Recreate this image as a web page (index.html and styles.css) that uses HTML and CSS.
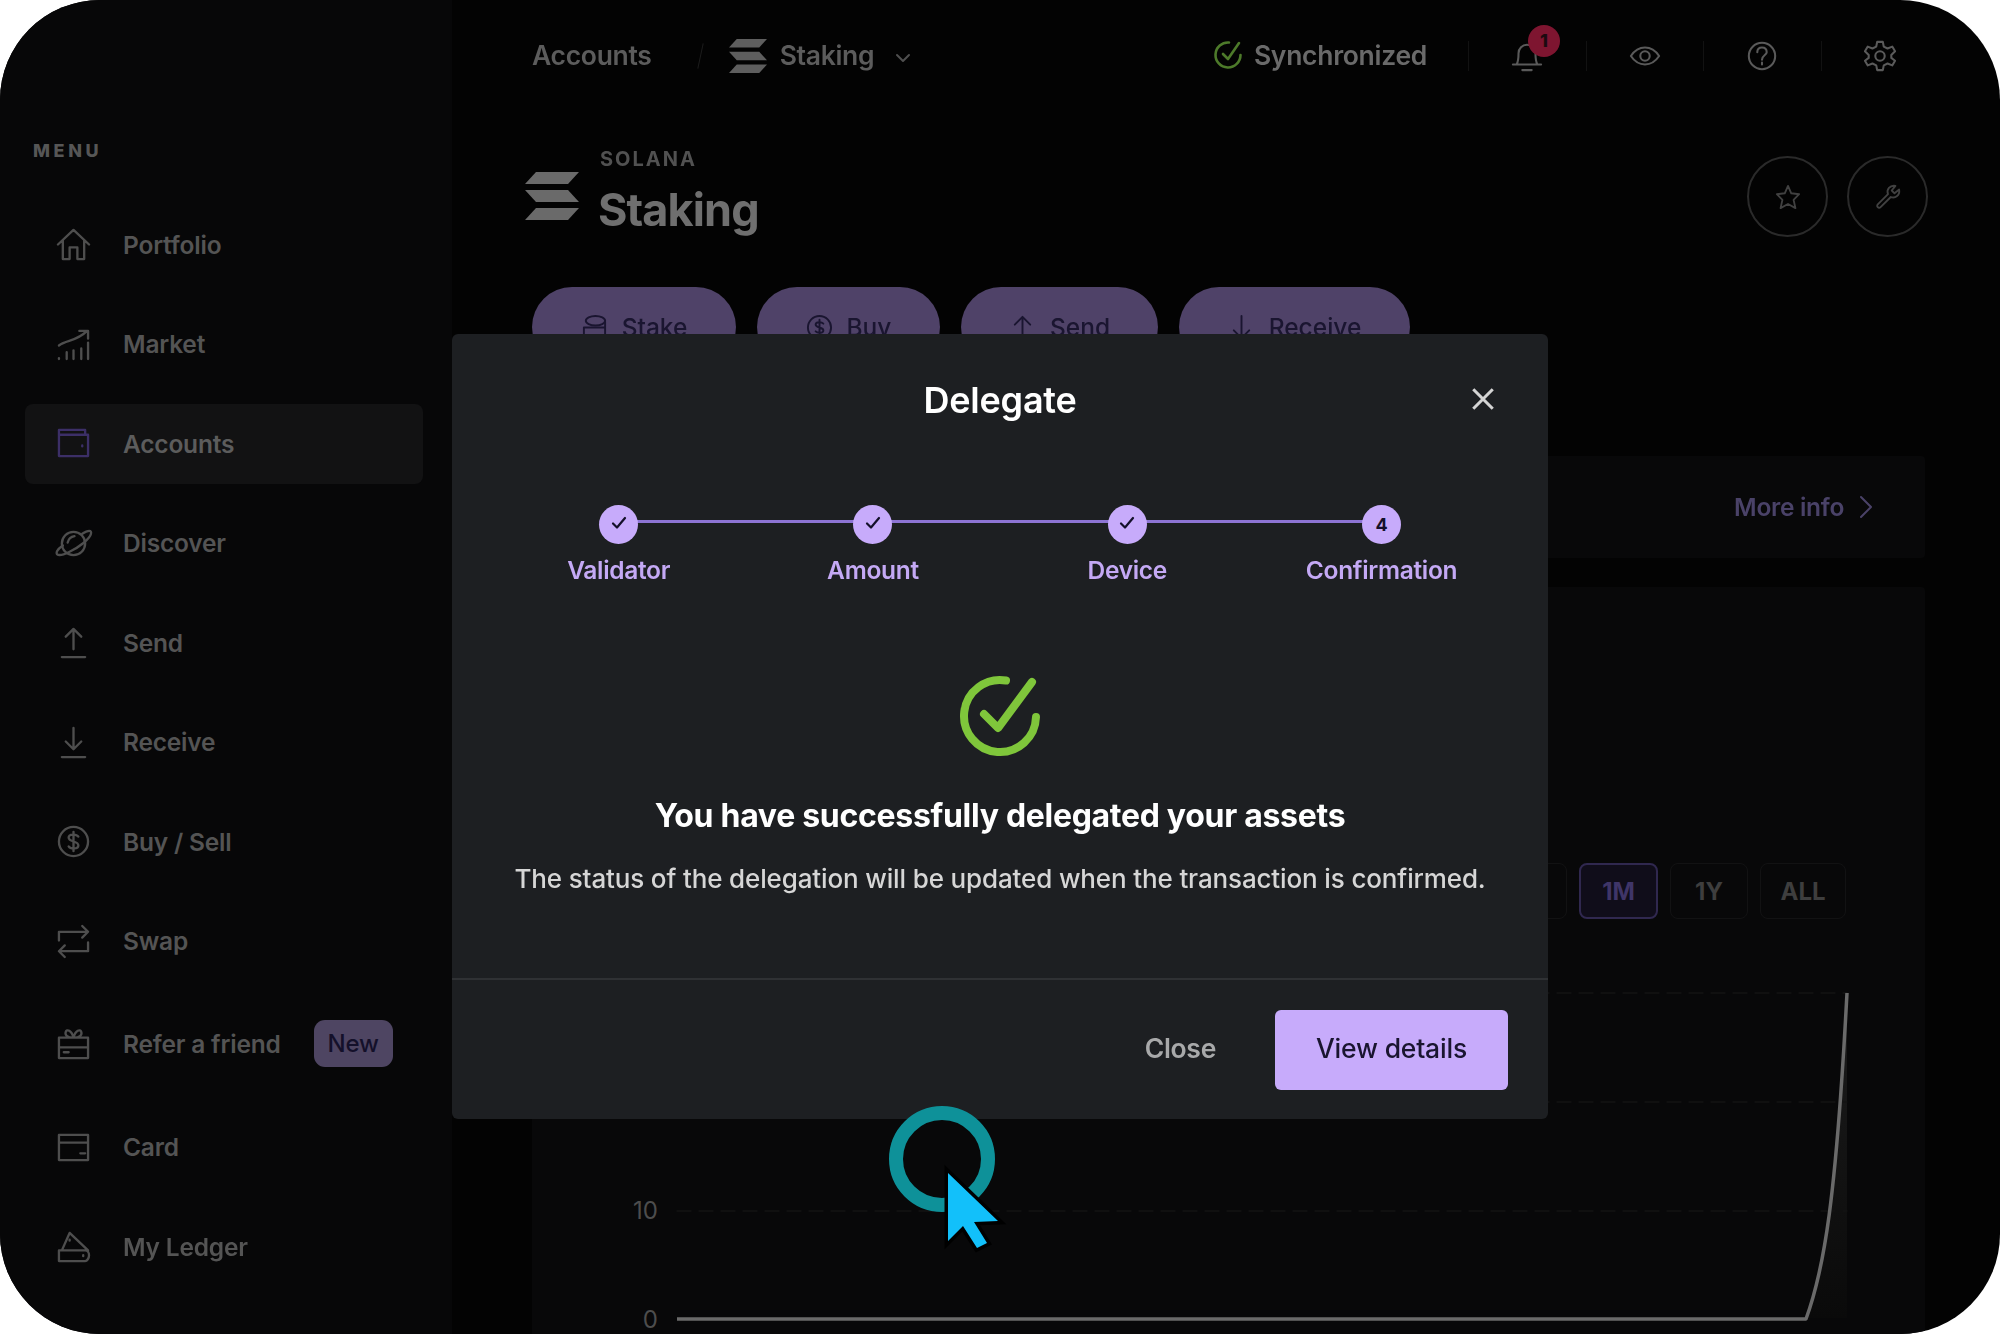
FILE: index.html
```html
<!DOCTYPE html>
<html lang="en">
<head>
<meta charset="utf-8">
<title>Delegate</title>
<link rel="stylesheet" href="styles.css">
</head>
<body>
<svg class="defs" width="0" height="0" aria-hidden="true">
  <defs>
    <g id="sol"><path d="M11 0H54L43 12H0Z"/><path d="M0 18H43L54 30H11Z"/><path d="M11 36H54L43 48H0Z"/></g>
    <path id="tick" d="M3 8.5L7 12.5L15 3"/>
  </defs>
</svg>
<div class="app">
  <div class="backdrop">
    <aside class="sidebar">
      <div class="menu-title">MENU</div>
      <nav class="nav">
        <a class="nav-item"><svg class="nav-icon" viewBox="0 0 34 34"><path d="M1 17L17 2L33 17M6 13V32H13V20H21V32H28V13"/></svg><span>Portfolio</span></a>
        <a class="nav-item"><svg class="nav-icon" viewBox="0 0 34 34"><path d="M2 18C10 12 20 14 31 3M23 3H32V11M2 32V31M10 32V25M17 32V23M25 32V21M32 32V15"/></svg><span>Market</span></a>
        <a class="nav-item active"><svg class="nav-icon" viewBox="0 0 34 34"><path d="M2 8V30H32V8H2ZM2 8V3H29V8M26 19V20"/></svg><span>Accounts</span></a>
        <a class="nav-item"><svg class="nav-icon" viewBox="0 0 34 34"><circle cx="17" cy="17" r="12"/><path d="M11 16C12 12 15 10 18 9.500M26 7C32 3 36 3 35 7C34 12 23 21 12 26C4 30 -2 30 0 25C1 23 3 21 6 19"/></svg><span>Discover</span></a>
        <a class="nav-item"><svg class="nav-icon" viewBox="0 0 34 34"><path d="M17 24V3M9 11L17 3L25 11M5 32H29"/></svg><span>Send</span></a>
        <a class="nav-item"><svg class="nav-icon" viewBox="0 0 34 34"><path d="M17 2V24M9 16L17 24L25 16M5 32H29"/></svg><span>Receive</span></a>
        <a class="nav-item"><svg class="nav-icon" viewBox="0 0 34 34"><circle cx="17" cy="17" r="15"/><path d="M22 12C20 9 12 9 12 13C12 18 22 16 22 21C22 25 14 25 12 22M17 7V27"/></svg><span>Buy / Sell</span></a>
        <a class="nav-item"><svg class="nav-icon" viewBox="0 0 34 34"><path d="M2 16V7H32M26 1L32 7L26 13M32 18V27H2M8 21L2 27L8 33"/></svg><span>Swap</span></a>
        <a class="nav-item refer"><svg class="nav-icon" viewBox="0 0 34 34"><path d="M2 11H32V32H2ZM2 21H32M7 26H12M17 11C10 11 8 8 9 5C10 2 15 3 17 11C19 3 24 2 25 5C26 8 24 11 17 11Z"/></svg><span>Refer a friend</span><b class="badge-new">New</b></a>
        <a class="nav-item card-item"><svg class="nav-icon" viewBox="0 0 34 34"><path d="M2 4H32V30H2ZM2 12H32M24 23H29"/></svg><span>Card</span></a>
        <a class="nav-item"><svg class="nav-icon" viewBox="0 0 34 34"><path d="M2 21H29C32 21 33 24 33 26C33 29 31 32 29 32H2ZM5 21L13 3L32 21M13 10V11M27 26V27"/></svg><span>My Ledger</span></a>
      </nav>
    </aside>
    <main class="main">
      <header class="topbar">
        <span class="crumb">Accounts</span>
        <span class="slash"></span>
        <svg class="sol-small" viewBox="0 0 54 48"><use href="#sol"/></svg>
        <span class="crumb">Staking</span>
        <svg class="chev" viewBox="0 0 16 10"><path d="M2 2L8 8L14 2"/></svg>
        <div class="sync">
          <svg class="sync-icon" viewBox="0 0 30 30"><path d="M16 2.500A12.500 12.500 0 1 0 27.500 15M10 14L15 19L26 3"/></svg>
          <span>Synchronized</span>
        </div>
        <div class="top-actions">
          <div class="top-btn"><svg viewBox="0 0 34 34"><path d="M6 26C8 22 8 18 8 14C8 9 12 5 17 5C22 5 26 9 26 14C26 18 26 22 28 26ZM2 26H32M12 32H22"/></svg><b class="bell-badge">1</b></div>
          <div class="top-btn"><svg viewBox="0 0 34 34"><path d="M2 17C10 5 24 5 32 17C24 29 10 29 2 17Z"/><circle cx="17" cy="17" r="5"/></svg></div>
          <div class="top-btn"><svg viewBox="0 0 34 34"><circle cx="17" cy="17" r="14"/><path d="M12 13C12 9 15 8 17 8C20 8 22 10 22 13C22 16 17 16 17 21M17 24V26"/></svg></div>
          <div class="top-btn"><svg viewBox="0 0 34 34"><path d="M14 2H20L21 7L25 9L30 7L33 12L29 16V19L33 22L30 27L25 25L21 27L20 32H14L13 27L9 25L4 27L1 22L5 19V16L1 12L4 7L9 9L13 7Z"/><circle cx="17" cy="17" r="5"/></svg></div>
        </div>
      </header>
      <section class="page-head">
        <svg class="sol-big" viewBox="0 0 54 48"><use href="#sol"/></svg>
        <div class="page-title">
          <div class="eyebrow">SOLANA</div>
          <h1>Staking</h1>
        </div>
        <div class="round-actions">
          <button class="round"><svg viewBox="0 0 28 28"><path d="M14 2L17.500 10L26 11L20 17L22 26L14 21.500L6 26L8 17L2 11L10.500 10Z"/></svg></button>
          <button class="round"><svg viewBox="0 0 28 28"><path d="M3 22L14 11C12 6 16 1 22 2L18 7L21 10L26 6C27 12 22 16 17 14L6 25C4 27 1 24 3 22Z"/></svg></button>
        </div>
      </section>
      <div class="actions">
        <button class="pill pill-stake"><svg viewBox="0 0 28 28"><ellipse cx="15" cy="7" rx="10" ry="5"/><path d="M3 14H25V26H3ZM25 8V14"/></svg>Stake</button>
        <button class="pill pill-buy"><svg viewBox="0 0 28 28"><circle cx="14" cy="14" r="12"/><path d="M18 10C16 8 10 8 10 11C10 15 18 13 18 17C18 20 12 20 10 18M14 6V22"/></svg>Buy</button>
        <button class="pill pill-send"><svg viewBox="0 0 28 28"><path d="M14 26V3M6 11L14 3L22 11"/></svg>Send</button>
        <button class="pill pill-receive"><svg viewBox="0 0 28 28"><path d="M14 2V25M6 17L14 25L22 17"/></svg>Receive</button>
      </div>
      <section class="info-card">
        <a class="more">More info<svg viewBox="0 0 14 24"><path d="M2 2L12 12L2 22"/></svg></a>
      </section>
      <section class="chart-card">
        <div class="ranges">
          <button class="range">1W</button>
          <button class="range on">1M</button>
          <button class="range">1Y</button>
          <button class="range">ALL</button>
        </div>
        <svg class="plot" viewBox="532 960 1393 374">
          <defs>
            <linearGradient id="fade" x1="0" y1="0" x2="0" y2="1"><stop offset="0" stop-color="#1c1c1c"/><stop offset="1" stop-color="#0a0a0a"/></linearGradient>
          </defs>
          <path class="area" d="M1807 1318C1824 1270 1836 1200 1847 993V1318Z" fill="url(#fade)"/>
          <path class="grid" d="M677 993H1847M677 1102H1847M677 1211H1847"/>
          <text class="tick-label" x="658" y="1219">10</text>
          <text class="tick-label" x="658" y="1328">0</text>
          <path class="curve" d="M677 1319H1806C1824 1270 1836 1200 1847 993"/>
        </svg>
      </section>
    </main>
  </div>

  <div class="modal">
    <header class="modal-head">
      <h2>Delegate</h2>
      <svg class="close-x" viewBox="0 0 24 24"><path d="M3 3L21 21M21 3L3 21"/></svg>
    </header>
    <ol class="steps">
      <li class="step"><span class="dot"><svg viewBox="0 0 18 16"><use href="#tick"/></svg></span><span class="step-label">Validator</span></li>
      <li class="step"><span class="dot"><svg viewBox="0 0 18 16"><use href="#tick"/></svg></span><span class="step-label">Amount</span></li>
      <li class="step"><span class="dot"><svg viewBox="0 0 18 16"><use href="#tick"/></svg></span><span class="step-label">Device</span></li>
      <li class="step"><span class="dot">4</span><span class="step-label">Confirmation</span></li>
    </ol>
    <div class="result">
      <svg class="result-icon" viewBox="0 0 80 80"><path d="M46 4.500A36 36 0 1 0 76 41M24 38L38 52L72 6"/></svg>
      <h3>You have successfully delegated your assets</h3>
      <p>The status of the delegation will be updated when the transaction is confirmed.</p>
    </div>
    <footer class="modal-foot">
      <button class="btn-text">Close</button>
      <button class="btn-primary">View details</button>
    </footer>
  </div>

  <svg class="pointer" viewBox="0 0 150 150">
    <circle class="ring" cx="56" cy="53" r="46"/>
    <path class="arrow" d="M62 67L112 115L88 116L101 137L91 142L77 120L62 135Z"/>
  </svg>
</div>
</body>
</html>
```
FILE: styles.css
```css
* { box-sizing: border-box; }
html, body { margin: 0; padding: 0; width: 2000px; height: 1334px; overflow: hidden; background: #fff; }
body { font-family: Inter, "Liberation Sans", sans-serif; }
.defs { position: absolute; }
button { font-family: inherit; border: 0; background: none; padding: 0; }
h1, h2, h3, p, ol { margin: 0; padding: 0; }
svg { display: block; fill: none; stroke-linecap: round; stroke-linejoin: round; }

.app { position: relative; width: 2000px; height: 1334px; border-radius: 100px; overflow: hidden; background: #030303; }
.backdrop { display: flex; width: 100%; height: 100%; filter: blur(0.6px); }

/* Sidebar */
.sidebar { width: 452px; flex: none; background: #070708; padding: 142px 29px 0 25px; }
.menu-title { margin-left: 8px; height: 18px; line-height: 18px; font-size: 18px; font-weight: 800; letter-spacing: 3.6px; color: #565656; }
.nav { display: flex; flex-direction: column; gap: 21.5px; margin-top: 45.5px; }
.nav-item { display: flex; align-items: center; height: 78px; padding-left: 32px; border-radius: 8px; font-size: 24.5px; font-weight: 600; letter-spacing: -0.2px; color: #545454; }
.nav-item.active { height: 80px; margin: -1px 0; background: #121213; color: #5c5c5c; }
.nav-item.refer { height: 84px; }
.nav-item.card-item { margin-top: 1px; }
.nav-icon { width: 33px; height: 33px; margin-right: 33px; flex: none; stroke: #4e4e4e; stroke-width: 2.4; overflow: visible; }
.active .nav-icon { stroke: #3c2f67; }
.badge-new { display: flex; align-items: center; justify-content: center; width: 79px; height: 47px; margin-left: 33px; border-radius: 11px; background: #4e4562; color: #14102a; font-size: 24px; font-weight: 500; }

/* Main */
.main { flex: 1; min-width: 0; padding: 0 75px 0 80px; display: flex; flex-direction: column; }
.topbar { display: flex; align-items: center; height: 112px; flex: none; margin-right: -13px; color: #5c5c5c; }
.crumb { margin-top: -2px; font-size: 26.5px; font-weight: 600; letter-spacing: -0.3px; }
.slash { width: 1px; height: 26px; margin: 0 28px 0 48px; background: #1c1c1c; transform: rotate(12deg); }
.sol-small { width: 38px; height: 34px; margin-right: 13px; fill: #5e5e5e; stroke: none; }
.chev { width: 16px; height: 10px; margin: 4px 0 0 21px; stroke: #4f4f4f; stroke-width: 2; }
.sync { display: flex; align-items: center; margin-left: auto; margin-top: -2px; font-size: 26.5px; font-weight: 600; letter-spacing: -0.3px; color: #6a6a6a; }
.sync-icon { width: 30px; height: 30px; margin-right: 11px; stroke: #4d7a2a; stroke-width: 2.6; }
.top-actions { display: flex; margin-left: 41px; }
.top-btn { position: relative; width: 117.500px; height: 30px; display: flex; align-items: center; justify-content: center; border-left: 1px solid #121212; }
.top-btn svg { width: 32px; height: 32px; flex: none; stroke: #5a5a5a; stroke-width: 2.2; }
.bell-badge { position: absolute; left: 59px; top: -16px; width: 32px; height: 32px; border-radius: 50%; background: #7e1530; color: #1c0a10; font-size: 18px; font-weight: 800; line-height: 32px; text-align: center; }

.page-head { display: flex; height: 101px; flex: none; align-items: flex-start; }
.sol-big { width: 54px; height: 48px; margin: 60px 21px 0 -7px; fill: #6a6a6a; stroke: none; flex: none; }
.eyebrow { font-size: 20px; font-weight: 700; letter-spacing: 2px; line-height: 24px; margin-top: 35px; color: #515151; }
h1 { font-size: 45px; line-height: 52px; font-weight: 700; letter-spacing: -0.9px; color: #6f6f6f; margin-top: 13px; margin-left: -2px; }
.round-actions { display: flex; gap: 19px; margin-left: auto; margin-top: 44px; margin-right: -3px; }
.round { width: 81px; height: 81px; border-radius: 50%; border: 2px solid #2a2a2a; display: flex; align-items: center; justify-content: center; }
.round svg { width: 26px; height: 26px; stroke: #414141; stroke-width: 2; }

.actions { display: flex; gap: 21px; height: 80px; margin-top: 74px; flex: none; }
.pill { height: 80px; border-radius: 40px; background: #4f4268; color: #1a1530; font-size: 24.5px; font-weight: 500; display: flex; align-items: center; justify-content: center; gap: 14px; }
.pill svg { width: 27px; height: 27px; stroke: #1a1530; stroke-width: 2; }
.pill-stake { width: 204px; }
.pill-buy { width: 183px; }
.pill-send { width: 197px; }
.pill-receive { width: 231px; }

.info-card { height: 102px; margin-top: 89px; background: #080809; flex: none; display: flex; align-items: center; justify-content: flex-end; padding-right: 52px; border-radius: 4px; }
.more { display: flex; align-items: center; gap: 15px; font-size: 24.5px; font-weight: 600; letter-spacing: -0.3px; color: #4a4268; }
.more svg { width: 14px; height: 24px; stroke: #4a4268; stroke-width: 2; }

.chart-card { flex: 1; margin-top: 29px; background: #080809; border-radius: 4px 4px 0 0; position: relative; min-height: 0; padding-top: 276px; display: flex; flex-direction: column; }
.ranges { display: flex; justify-content: flex-end; gap: 12px; padding-right: 79px; flex: none; }
.range { width: 78px; height: 56px; border: 1px solid #121213; border-radius: 8px; font-size: 24px; font-weight: 700; color: #3e3e3e; }
.range:last-child { width: 86px; }
.range.on { width: 79px; border: 2px solid #30284f; background: #100d1a; color: #3f3568; }
.plot { width: 1393px; height: 374px; flex: none; margin-top: 41px; }
.grid { stroke: #131313; stroke-width: 1.5; stroke-dasharray: 14 8; }
.curve { stroke: #6a6a6a; stroke-width: 3.5; stroke-linecap: butt; }
.area { stroke: none; }
.tick-label { fill: #4d4d4d; font-size: 24px; text-anchor: end; font-weight: 400; }

/* Modal */
.modal { position: absolute; left: 452px; top: 334px; width: 1096px; height: 785px; background: #1d1f22; border-radius: 6px; display: flex; flex-direction: column; }
.modal-head { height: 132px; flex: none; display: flex; align-items: center; justify-content: center; position: relative; }
h2 { font-size: 36px; font-weight: 600; letter-spacing: -0.2px; color: #fff; }
.close-x { position: absolute; right: 52px; top: 52px; width: 26px; height: 26px; stroke: #d4d4d4; stroke-width: 2.8; stroke-linecap: butt; }

.steps { list-style: none; display: grid; grid-template-columns: repeat(4, 254.300px); margin: 38px 0 0 39.500px; flex: none; }
.step { position: relative; display: flex; flex-direction: column; align-items: center; }
.step:not(:last-child)::after { content: ""; position: absolute; left: 50%; top: 16px; width: 100%; height: 3px; background: #8d74d4; }
.dot { position: relative; z-index: 1; width: 39px; height: 39px; margin-top: 1px; border-radius: 50%; background: #c7abfb; display: flex; align-items: center; justify-content: center; font-size: 18px; font-weight: 700; color: #14102a; }
.dot svg { width: 18px; height: 16px; margin-top: -4px; stroke: #14102a; stroke-width: 2.2; }
.step-label { margin-top: 11px; line-height: 30px; font-size: 24.5px; font-weight: 600; letter-spacing: -0.3px; color: #c4a9f5; white-space: nowrap; }

.result { display: flex; flex-direction: column; align-items: center; flex: none; margin-top: 91px; }
.result-icon { width: 80px; height: 80px; stroke: #7fc63b; stroke-width: 8; overflow: visible; }
h3 { margin-top: 40px; line-height: 40px; font-size: 32px; font-weight: 700; letter-spacing: -0.3px; color: #fff; }
.result p { margin-top: 25px; line-height: 36px; font-size: 26px; font-weight: 500; letter-spacing: -0.14px; color: #d6d6d6; }

.modal-foot { margin-top: auto; height: 141px; flex: none; border-top: 2px solid #2f3134; display: flex; align-items: center; justify-content: flex-end; padding: 0 40px 0 0; gap: 59px; }
.btn-text { margin-top: -3px; font-size: 26.5px; font-weight: 600; letter-spacing: -0.3px; color: #a8a9aa; }
.btn-primary { width: 233px; height: 80px; margin-top: 1px; padding-bottom: 4px; border-radius: 6px; background: #c7abfb; color: #1a1530; font-size: 26.5px; font-weight: 500; letter-spacing: -0.2px; }

/* Recorded pointer */
.pointer { position: absolute; left: 886px; top: 1106px; width: 150px; height: 150px; overflow: visible; }
.ring { stroke: #0e9199; stroke-width: 14; }
.arrow { fill: #12c0fa; stroke: #000; stroke-width: 7; paint-order: stroke; stroke-linejoin: miter; }
```
